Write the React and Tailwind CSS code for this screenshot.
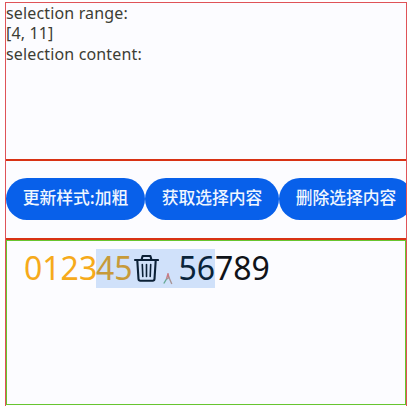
const actions = ["更新样式:加粗", "获取选择内容", "删除选择内容"];

function TrashIcon() {
  return (
    <svg className="h-[30px] w-[26px] shrink-0" viewBox="0 0 26 30" fill="none" stroke="#0b2036" strokeWidth="2.1" strokeLinecap="round" strokeLinejoin="round">
      <path d="M2 6H25M8.5 6L9.6 2H17.4L18.5 6M4.3 6.5L5.5 25Q5.6 26.8 7.4 26.8H19.6Q21.4 26.8 21.5 25L22.7 6.5" />
      <path d="M9.3 10.5L9.8 22.5M13.5 10.5V22.5M17.7 10.5L17.2 22.5" strokeWidth="1.6" />
    </svg>
  );
}

function InlineMark() {
  return (
    <svg className="mt-[20px] h-[12px] w-[11px] shrink-0" viewBox="0 0 11 12" fill="none" strokeWidth="1.4">
      <path d="M0.8 10.5L3.8 5.5" stroke="#65a894" />
      <path d="M3.5 6L5 0.8L6 5" stroke="#c77b83" />
      <path d="M3.8 6L6 4.5L8.8 11" stroke="#a89496" />
    </svg>
  );
}

export default function App() {
  return (
    <main className="h-[406px] w-[408px] overflow-hidden bg-white pl-[5px] pt-[2px] font-['Noto_Sans','Noto_Sans_CJK_SC',sans-serif]">
      <div className="flex h-[404px] w-[402px] flex-col border border-b-0 border-[#df5358] bg-[#fcfcff]">
        <section className="h-[156px] shrink-0 text-[16px] leading-[20.4px] tracking-[0.15px] text-[#3d3d34]">
          <p>selection range:</p>
          <p>[4, 11]</p>
          <p>selection content:</p>
        </section>
        <section className="flex h-[81px] shrink-0 items-center overflow-hidden border-y-2 border-[#d83214] pb-[1px]">
          {actions.map((label, i) => (
            <button
              key={label}
              className={`flex h-[42px] shrink-0 items-center justify-center whitespace-nowrap rounded-full bg-[#0860ea] pb-[3px] font-['Noto_Sans_CJK_SC',sans-serif] text-[16.8px] font-medium leading-[39px] text-[#eff6ff] ${i === 0 ? "w-[139px]" : "w-[134px]"}`}
            >
              {label}
            </button>
          ))}
        </section>
        <section className="h-[165px] shrink-0 border border-[#68c52f] pl-[17px] pt-[8px]">
          <div className="flex h-[39px] items-center text-[32px] leading-[38px] text-[#101319]">
            <span className="-mt-[2px] w-[72px] text-[#f6aa1b]">0123</span>
            <div className="flex h-[39px] w-[119px] items-center bg-[#d0e1fa]">
              <span className="-mt-[2px] w-[37px] text-[#c79a39]">45</span>
              <TrashIcon />
              <span className="w-[6px]" />
              <InlineMark />
              <span className="-mt-[2px] ml-[4px] text-[#09243a]">56</span>
            </div>
            <span className="-mt-[2px]">789</span>
          </div>
        </section>
      </div>
    </main>
  );
}
